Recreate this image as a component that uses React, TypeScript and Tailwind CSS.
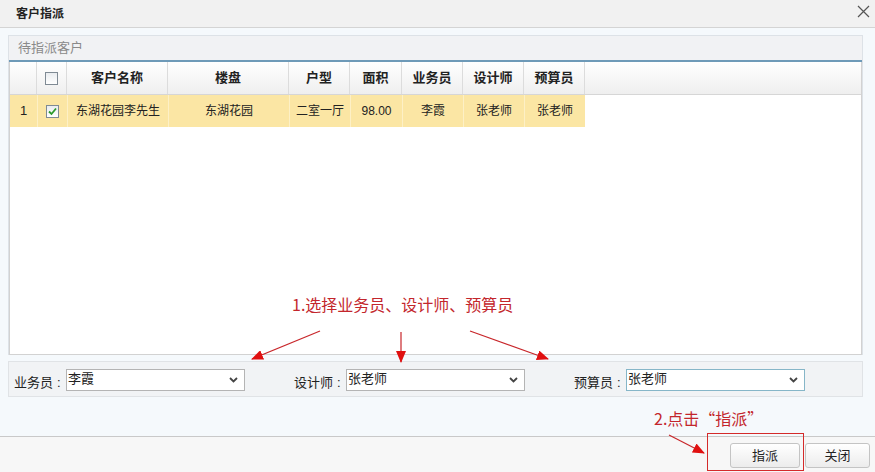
import React from 'react';

const COLS = [
  { key: 'name', title: '客户名称', w: 'w-[101px]', v: '东湖花园李先生' },
  { key: 'estate', title: '楼盘', w: 'w-[121px]', v: '东湖花园' },
  { key: 'type', title: '户型', w: 'w-[61px]', v: '二室一厅' },
  { key: 'area', title: '面积', w: 'w-[52px]', v: '98.00' },
  { key: 'sales', title: '业务员', w: 'w-[61px]', v: '李霞' },
  { key: 'designer', title: '设计师', w: 'w-[61px]', v: '张老师' },
  { key: 'budget', title: '预算员', w: 'w-[61px]', v: '张老师' },
];

const Checkbox: React.FC<{ checked?: boolean }> = ({ checked }) => (
  <span className="w-[13px] h-[13px] border border-[#7f8a94] bg-gradient-to-b from-[#e9ecef] to-white flex items-center justify-center">
    {checked && (
      <svg width="9" height="9" viewBox="0 0 9 9">
        <path d="M1 4.5 L3.5 7 L8 1.5" stroke="#2c9a2c" strokeWidth="1.8" fill="none" />
      </svg>
    )}
  </span>
);

const Select: React.FC<{ value: string; focused?: boolean }> = ({ value, focused }) => (
  <div
    className={`w-[179px] h-[22px] bg-white border flex items-center justify-between pr-[6px] ${
      focused ? 'border-[#86b6c8]' : 'border-[#b4b4b4]'
    }`}
  >
    <span className="text-[13px] text-[#222] pl-[1px] pb-[3px]">{value}</span>
    <svg width="9" height="6" viewBox="0 0 9 6">
      <path d="M1 1 L4.5 4.5 L8 1" stroke="#444" strokeWidth="1.8" fill="none" />
    </svg>
  </div>
);

const Field: React.FC<{ label: string; value: string; focused?: boolean }> = ({ label, value, focused }) => (
  <div className="w-[280px] flex items-center">
    <span className="w-[52px] flex text-[13px] text-[#222] pt-[6px]">
      {label}
      <span className="ml-[4px]">:</span>
    </span>
    <Select value={value} focused={focused} />
  </div>
);

export default function App() {
  return (
    <div className="relative w-[875px] h-[472px] flex flex-col bg-[#f5f9fc] overflow-hidden [font-family:'Liberation_Sans','Noto_Sans_CJK_SC',sans-serif]">
      {/* title bar */}
      <div className="h-[28px] shrink-0 bg-[#f1f1f1] border-b border-[#d4d4d4] flex items-center justify-between pl-[16px] pr-[5px]">
        <span className="text-[12px] font-bold text-[#222]">客户指派</span>
        <svg width="13" height="13" viewBox="0 0 13 13" className="mb-[4px]">
          <path d="M1 1 L12 12 M12 1 L1 12" stroke="#555" strokeWidth="1.2" />
        </svg>
      </div>

      {/* body */}
      <div className="flex-1 flex flex-col pl-[8px] pr-[12px] pt-[7px]">
        <div className="h-[320px] flex flex-col border border-[#dde2e7] border-b-0">
          <div className="h-[24px] bg-[#f1f2f4] flex items-center pl-[9px] text-[13px] text-[#8a8a8a]">待指派客户</div>
          <div className="h-[2px] bg-[#6e9ab8]" />
          <div className="flex-1 flex flex-col bg-white border-b border-r border-[#d2d2d2] border-l">
            <div className="h-[33px] flex border-b border-[#d6d6d6] bg-gradient-to-b from-white to-[#efefef]">
              <div className="w-[27px] border-r border-[#dcdcdc]" />
              <div className="w-[30px] border-r border-[#dcdcdc] flex items-center justify-center">
                <Checkbox />
              </div>
              {COLS.map((c) => (
                <div
                  key={c.key}
                  className={`${c.w} border-r border-[#dcdcdc] flex items-center justify-center text-[13px] font-bold text-[#222]`}
                >
                  {c.title}
                </div>
              ))}
            </div>
            <div className="h-[32px] flex">
              <div className="w-[27px] bg-[#fbe6a4] flex items-center justify-center text-[13px] text-[#222]">1</div>
              <div className="w-[30px] bg-[#fbe6a4] border-l border-[#fdf0c6] flex items-center justify-center">
                <Checkbox checked />
              </div>
              {COLS.map((c) => (
                <div
                  key={c.key}
                  className={`${c.w} bg-[#fbe6a4] border-l border-[#fdf0c6] flex items-center justify-center text-[12px] text-[#222]`}
                >
                  {c.v}
                </div>
              ))}
            </div>
          </div>
        </div>

        <div className="mt-[6px] h-[36px] bg-[#f1f3f5] border border-[#e0e3e6] flex items-center pl-[5px] pt-[2px]">
          <Field label="业务员" value="李霞" />
          <Field label="设计师" value="张老师" />
          <Field label="预算员" value="张老师" focused />
        </div>
      </div>

      {/* footer */}
      <div className="h-[36px] shrink-0 bg-[#f7f7f7] border-t border-[#c9c9c9] flex items-center justify-end pr-[5px] gap-[5px] pt-[2px]">
        <button className="w-[70px] h-[25px] rounded-[3px] border border-[#c4c4c4] bg-gradient-to-b from-white to-[#ececec] text-[13px] text-[#222]">
          指派
        </button>
        <button className="w-[65px] h-[25px] rounded-[3px] border border-[#c4c4c4] bg-gradient-to-b from-white to-[#ececec] text-[13px] text-[#222]">
          关闭
        </button>
      </div>

      {/* annotations */}
      <span className="absolute left-[292px] top-[294px] text-[16px] leading-[20px] text-[#c3262c] [font-family:'Noto_Sans_CJK_SC',sans-serif]">
        1.选择业务员、设计师、预算员
      </span>
      <span className="absolute left-[654px] top-[408px] text-[16px] leading-[20px] text-[#c3262c] [font-family:'Noto_Sans_CJK_SC',sans-serif]">
        2.点击“指派”
      </span>
      <div className="absolute left-[707px] top-[433px] w-[97px] h-[38px] border border-[#d42a2a]" />
      <svg className="absolute left-0 top-0 pointer-events-none" width="875" height="472">
        <defs>
          <marker id="ah" markerWidth="12" markerHeight="10" refX="11" refY="5" orient="auto" markerUnits="userSpaceOnUse">
            <path d="M0 0 L12 5 L0 10 Z" fill="#e01010" />
          </marker>
        </defs>
        <g stroke="#c8262a" strokeWidth="1.2" fill="none">
          <line x1="320" y1="331" x2="252" y2="359" markerEnd="url(#ah)" />
          <line x1="401" y1="332" x2="401" y2="362" markerEnd="url(#ah)" />
          <line x1="470" y1="331" x2="548" y2="359" markerEnd="url(#ah)" />
          <line x1="669" y1="435" x2="704" y2="453" markerEnd="url(#ah)" />
        </g>
      </svg>
    </div>
  );
}
